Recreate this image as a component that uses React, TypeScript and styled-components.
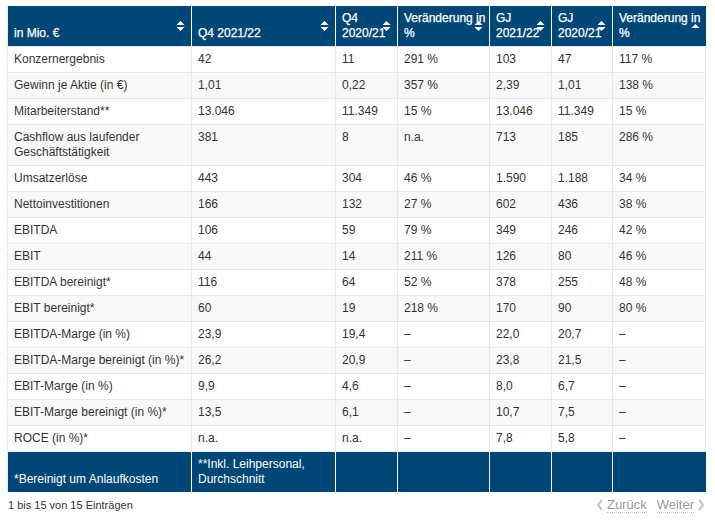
import styled, { createGlobalStyle } from "styled-components";

const GlobalStyle = createGlobalStyle`
  body {
    margin: 0;
    background: #fff;
    font-family: "Liberation Sans", Arial, sans-serif;
    color: #333;
  }
`;

const Wrapper = styled.div`
  padding: 6px 10px 0 7px;
`;

const Table = styled.table`
  width: 698px;
  border-collapse: collapse;
  table-layout: fixed;
  font-size: 12px;
  line-height: 15px;
  border-left: 1px solid #e8e8e8;
`;

const HeadCell = styled.th`
  position: relative;
  background: #004677;
  color: #fff;
  font-weight: normal;
  text-align: left;
  vertical-align: bottom;
  padding: 5px 2px 5px 6px;
  height: 30px;
  border-left: 1px solid #fff;
  -webkit-text-stroke: 0.25px #fff;
  &:first-child {
    border-left: none;
  }
`;

const SortIcon = styled.svg`
  position: absolute;
  right: 6px;
  top: 14px;
  width: 9px;
  height: 12px;
`;

const Row = styled.tr<{ $odd: boolean }>`
  background: ${(p) => (p.$odd ? "#f9f9f9" : "#fff")};
`;

const Cell = styled.td`
  padding: 5px 6px;
  vertical-align: top;
  border-top: 1px solid #e8e8e8;
  border-left: 1px solid #e8e8e8;
  border-right: 1px solid #e8e8e8;
`;

const FootCell = styled.td`
  background: #004677;
  color: #fff;
  padding: 5px 6px;
  vertical-align: bottom;
  height: 30px;
  border-left: 1px solid #fff;
  border-top: 1px solid #e8e8e8;
  &:first-child {
    border-left: none;
  }
`;

const Bottom = styled.div`
  display: flex;
  justify-content: space-between;
  align-items: center;
  margin-top: 5px;
  width: 698px;
`;

const Info = styled.div`
  font-size: 11px;
  color: #333;
  padding-left: 1px;
`;

const Pager = styled.div`
  display: flex;
  align-items: center;
  gap: 10px;
  font-size: 13px;
  color: #999;
`;

const PageLink = styled.span`
  display: flex;
  align-items: center;
  gap: 3px;
`;

const LinkText = styled.span`
  border-bottom: 1px dotted #a9c4d6;
  line-height: 15px;
`;

const Chevron = ({ dir }: { dir: "left" | "right" }) => (
  <svg width="8" height="14" viewBox="0 0 8 14">
    <polyline
      points={dir === "left" ? "6,2 2,7 6,12" : "2,2 6,7 2,12"}
      fill="none"
      stroke="#c8c8c8"
      strokeWidth="2.2"
    />
  </svg>
);

const Sort = ({ type }: { type: "both" | "asc" }) => (
  <SortIcon viewBox="0 0 9 12">
    {type === "both" ? (
      <>
        <polygon points="0.5,5 4.5,1 8.5,5" fill="#fff" />
        <polygon points="0.5,7 4.5,11 8.5,7" fill="#fff" />
      </>
    ) : (
      <polygon points="0.5,8 4.5,4 8.5,8" fill="#fff" />
    )}
  </SortIcon>
);

const columns: { label: string; width: number; sort: "both" | "asc" }[] = [
  { label: "in Mio. €", width: 184, sort: "both" },
  { label: "Q4 2021/22", width: 144, sort: "both" },
  { label: "Q4 2020/21", width: 62, sort: "both" },
  { label: "Veränderung in %", width: 92, sort: "both" },
  { label: "GJ 2021/22", width: 62, sort: "both" },
  { label: "GJ 2020/21", width: 61, sort: "both" },
  { label: "Veränderung in %", width: 93, sort: "asc" },
];

const rows: string[][] = [
  ["Konzernergebnis", "42", "11", "291 %", "103", "47", "117 %"],
  ["Gewinn je Aktie (in €)", "1,01", "0,22", "357 %", "2,39", "1,01", "138 %"],
  ["Mitarbeiterstand**", "13.046", "11.349", "15 %", "13.046", "11.349", "15 %"],
  ["Cashflow aus laufender Geschäftstätigkeit", "381", "8", "n.a.", "713", "185", "286 %"],
  ["Umsatzerlöse", "443", "304", "46 %", "1.590", "1.188", "34 %"],
  ["Nettoinvestitionen", "166", "132", "27 %", "602", "436", "38 %"],
  ["EBITDA", "106", "59", "79 %", "349", "246", "42 %"],
  ["EBIT", "44", "14", "211 %", "126", "80", "46 %"],
  ["EBITDA bereinigt*", "116", "64", "52 %", "378", "255", "48 %"],
  ["EBIT bereinigt*", "60", "19", "218 %", "170", "90", "80 %"],
  ["EBITDA-Marge (in %)", "23,9", "19,4", "–", "22,0", "20,7", "–"],
  ["EBITDA-Marge bereinigt (in %)*", "26,2", "20,9", "–", "23,8", "21,5", "–"],
  ["EBIT-Marge (in %)", "9,9", "4,6", "–", "8,0", "6,7", "–"],
  ["EBIT-Marge bereinigt (in %)*", "13,5", "6,1", "–", "10,7", "7,5", "–"],
  ["ROCE (in %)*", "n.a.", "n.a.", "–", "7,8", "5,8", "–"],
];

export default function App() {
  return (
    <Wrapper>
      <GlobalStyle />
      <Table>
        <colgroup>
          {columns.map((c, i) => (
            <col key={i} style={{ width: c.width }} />
          ))}
        </colgroup>
        <thead>
          <tr>
            {columns.map((c, i) => (
              <HeadCell key={i}>
                {c.label}
                <Sort type={c.sort} />
              </HeadCell>
            ))}
          </tr>
        </thead>
        <tbody>
          {rows.map((r, i) => (
            <Row key={i} $odd={i % 2 === 1}>
              {r.map((v, j) => (
                <Cell key={j}>{v}</Cell>
              ))}
            </Row>
          ))}
        </tbody>
        <tfoot>
          <tr>
            <FootCell>*Bereinigt um Anlaufkosten</FootCell>
            <FootCell>**Inkl. Leihpersonal, Durchschnitt</FootCell>
            <FootCell />
            <FootCell />
            <FootCell />
            <FootCell />
            <FootCell />
          </tr>
        </tfoot>
      </Table>
      <Bottom>
        <Info>1 bis 15 von 15 Einträgen</Info>
        <Pager>
          <PageLink>
            <Chevron dir="left" />
            <LinkText>Zurück</LinkText>
          </PageLink>
          <PageLink>
            <LinkText>Weiter</LinkText>
            <Chevron dir="right" />
          </PageLink>
        </Pager>
      </Bottom>
    </Wrapper>
  );
}
